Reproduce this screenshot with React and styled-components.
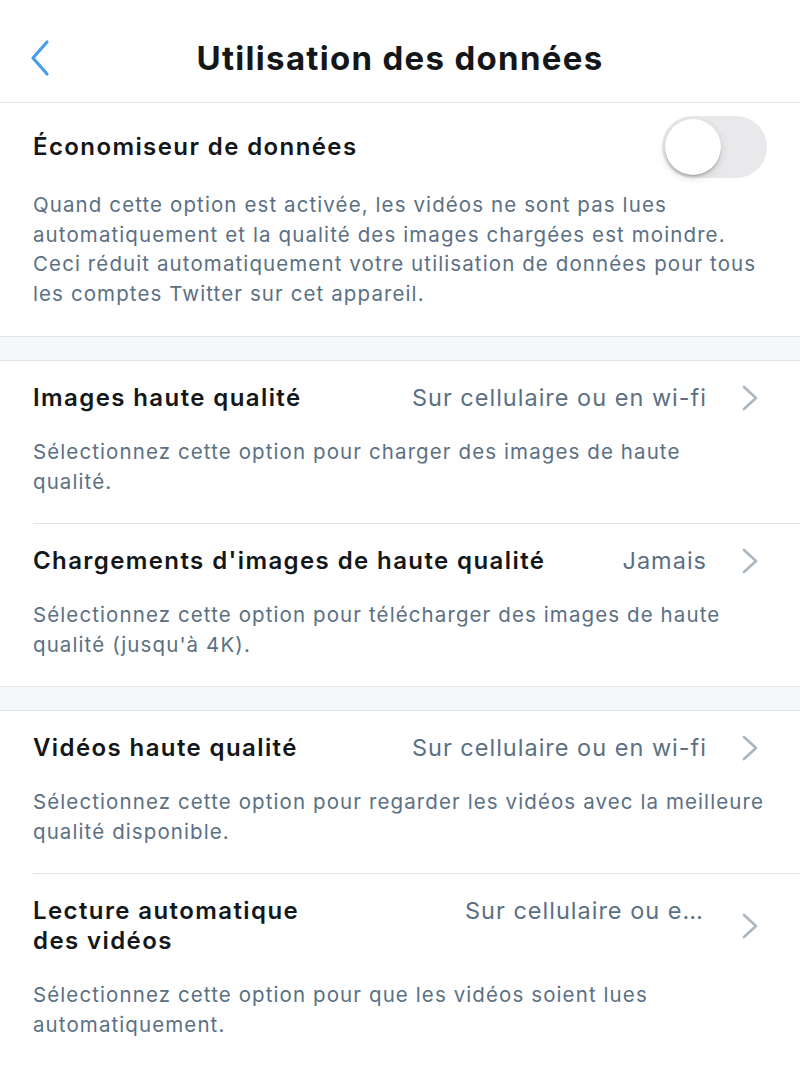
import React from "react";
import styled, { createGlobalStyle } from "styled-components";

const GlobalStyle = createGlobalStyle`
  * { box-sizing: border-box; }
  body {
    margin: 0;
    background: #ffffff;
    font-family: Inter, "Noto Sans", "Liberation Sans", sans-serif;
    -webkit-font-smoothing: antialiased;
  }
`;

const Page = styled.div`
  width: 800px;
  min-height: 1066px;
  background: #ffffff;
`;

const Header = styled.header`
  position: relative;
  height: 103px;
  padding-top: 14px;
  display: flex;
  align-items: center;
  justify-content: center;
  border-bottom: 1px solid #dfe4e8;
`;

const BackButton = styled.button`
  position: absolute;
  left: 24px;
  top: 36px;
  width: 32px;
  height: 44px;
  padding: 0;
  border: none;
  background: none;
  display: flex;
  align-items: center;
  justify-content: center;
`;

const HeaderTitle = styled.h1`
  margin: 0;
  font-size: 33px;
  font-weight: 700;
  letter-spacing: 1.3px;
  color: #14171a;
`;

const Section = styled.section`
  background: #ffffff;
  padding-left: 33px;
`;

const Spacer = styled.div`
  height: 25px;
  background: #f5f8fa;
  border-top: 1px solid #e1e6ea;
  border-bottom: 1px solid #e1e6ea;
`;

const Item = styled.div`
  padding: ${(p) => (p.$compact ? "13px 0 28px 0" : "22px 0 27px 0")};
  border-top: ${(p) => (p.$divided ? "1px solid #e1e6ea" : "none")};
`;

const Row = styled.div`
  display: flex;
  align-items: center;
  min-height: ${(p) => (p.$tall ? "62px" : "30px")};
  padding-right: ${(p) => (p.$tall ? "33px" : "40px")};
  gap: 16px;
`;

const Title = styled.div`
  flex: 1 1 auto;
  max-width: ${(p) => p.$maxWidth || "none"};
  margin-right: auto;
  font-size: 24px;
  line-height: 30px;
  font-weight: 600;
  color: #14171a;
  letter-spacing: 1.4px;
`;

const ValueWrap = styled.div`
  display: flex;
  align-items: center;
  gap: 33px;
  align-self: stretch;
  flex-shrink: 0;
`;

const Value = styled.div`
  font-size: 23.5px;
  line-height: 30px;
  color: #5b7083;
  letter-spacing: 1px;
  white-space: nowrap;
  overflow: hidden;
  text-overflow: ellipsis;
  max-width: ${(p) => p.$maxWidth || "none"};
  align-self: ${(p) => (p.$top ? "flex-start" : "center")};
`;

const Description = styled.p`
  margin: ${(p) => (p.$afterToggle ? "12px 34px 0 0" : "24px 34px 0 0")};
  font-size: 20.5px;
  line-height: 29.5px;
  color: #5b7083;
  letter-spacing: 1.1px;
`;

const Toggle = styled.div`
  width: 105px;
  height: 62px;
  border-radius: 31px;
  background: #e9e9eb;
  padding: 3px;
  flex-shrink: 0;
`;

const Knob = styled.div`
  width: 56px;
  height: 56px;
  border-radius: 50%;
  background: #ffffff;
  box-shadow: 0 3px 8px rgba(0, 0, 0, 0.15), 0 1px 1px rgba(0, 0, 0, 0.16),
    0 3px 1px rgba(0, 0, 0, 0.06);
`;

const BackIcon = () => (
  <svg width="22" height="38" viewBox="0 0 22 38">
    <polyline
      points="18,3 4,19 18,35"
      fill="none"
      stroke="#4a9de9"
      strokeWidth="3.2"
      strokeLinecap="round"
      strokeLinejoin="round"
    />
  </svg>
);

const Chevron = () => (
  <svg width="20" height="26" viewBox="0 0 20 26">
    <polyline
      points="4,2 16,13 4,24"
      fill="none"
      stroke="#aab6c1"
      strokeWidth="2.6"
      strokeLinecap="round"
      strokeLinejoin="round"
    />
  </svg>
);

const SettingItem = ({ title, value, description, divided, titleWidth, valueWidth }) => (
  <Item $divided={divided}>
    <Row>
      <Title $maxWidth={titleWidth}>{title}</Title>
      <ValueWrap>
        <Value $maxWidth={valueWidth} $top={!!titleWidth}>
          {value}
        </Value>
        <Chevron />
      </ValueWrap>
    </Row>
    <Description>{description}</Description>
  </Item>
);

export default function App() {
  return (
    <Page>
      <GlobalStyle />
      <Header>
        <BackButton aria-label="Retour">
          <BackIcon />
        </BackButton>
        <HeaderTitle>Utilisation des données</HeaderTitle>
      </Header>

      <Section>
        <Item $compact>
          <Row $tall>
            <Title>Économiseur de données</Title>
            <Toggle>
              <Knob />
            </Toggle>
          </Row>
          <Description $afterToggle>
            Quand cette option est activée, les vidéos ne sont pas lues
            automatiquement et la qualité des images chargées est moindre.
            Ceci réduit automatiquement votre utilisation de données pour tous
            les comptes Twitter sur cet appareil.
          </Description>
        </Item>
      </Section>

      <Spacer />

      <Section>
        <SettingItem
          title="Images haute qualité"
          value="Sur cellulaire ou en wi-fi"
          description={
            <>
              Sélectionnez cette option pour charger des images de haute
              <br />
              qualité.
            </>
          }
        />
        <SettingItem
          divided
          title="Chargements d'images de haute qualité"
          value="Jamais"
          description="Sélectionnez cette option pour télécharger des images de haute qualité (jusqu'à 4K)."
        />
      </Section>

      <Spacer />

      <Section>
        <SettingItem
          title="Vidéos haute qualité"
          value="Sur cellulaire ou en wi-fi"
          description="Sélectionnez cette option pour regarder les vidéos avec la meilleure qualité disponible."
        />
        <SettingItem
          divided
          title="Lecture automatique des vidéos"
          titleWidth="300px"
          value="Sur cellulaire ou en wi-fi"
          valueWidth="242px"
          description="Sélectionnez cette option pour que les vidéos soient lues automatiquement."
        />
      </Section>
    </Page>
  );
}
